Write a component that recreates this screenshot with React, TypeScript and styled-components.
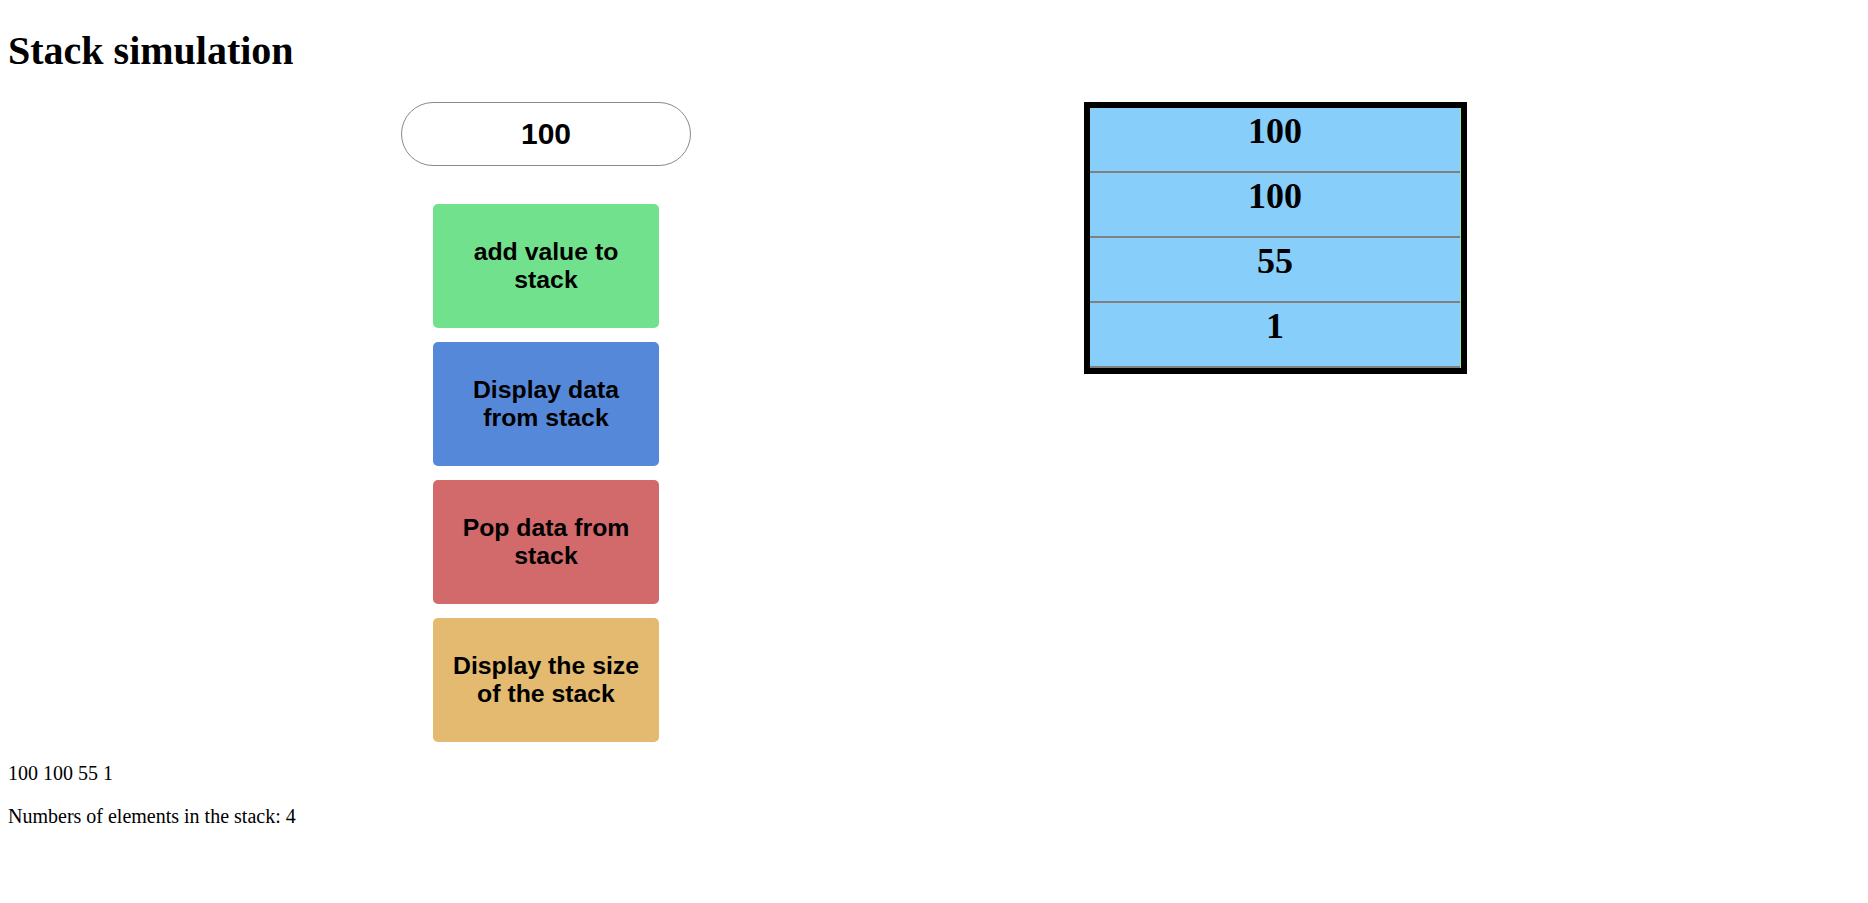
import React from "react";
import styled, { createGlobalStyle } from "styled-components";

const GlobalStyle = createGlobalStyle`
  body {
    margin: 8px;
    font-family: "Liberation Serif", "Times New Roman", serif;
    background: #ffffff;
    color: #000000;
  }
`;

const Title = styled.h1`
  font-family: "Liberation Serif", "Times New Roman", serif;
  font-size: 40px;
  font-weight: bold;
  margin: 18.5px 0 28.2px;
`;

const Workspace = styled.div`
  display: flex;
  justify-content: space-evenly;
  align-items: flex-start;
`;

const Controls = styled.div`
  display: flex;
  flex-direction: column;
  align-items: center;
  width: 290px;
`;

const ValueInput = styled.input`
  box-sizing: border-box;
  width: 290px;
  height: 64.5px;
  border: 1px solid #8a8a8a;
  border-radius: 33px;
  text-align: center;
  font-family: "Liberation Sans", Arial, sans-serif;
  font-size: 30px;
  font-weight: bold;
  color: #000000;
  outline: none;
  background: #ffffff;
  margin-bottom: 37.5px;
`;

const ButtonList = styled.div`
  display: flex;
  flex-direction: column;
  gap: 13.5px;
`;

const ActionButton = styled.button<{ $bg: string }>`
  box-sizing: border-box;
  width: 226px;
  height: 124.5px;
  padding: 0 10px;
  border: none;
  border-radius: 5px;
  background: ${(p) => p.$bg};
  color: #000000;
  font-family: "Liberation Sans", Arial, sans-serif;
  font-size: 24.8px;
  font-weight: bold;
  line-height: normal;
  cursor: pointer;
`;

const StackBox = styled.div`
  box-sizing: border-box;
  width: 383px;
  border: 6px solid #000000;
  background: #90ee90;
  display: flex;
  flex-direction: column;
`;

const StackRow = styled.div`
  box-sizing: border-box;
  height: 65px;
  margin-right: 1px;
  padding-top: 2px;
  background: #87cefa;
  border-bottom: 2px solid #808080;
  text-align: center;
  font-family: "Liberation Serif", "Times New Roman", serif;
  font-size: 36px;
  font-weight: bold;
`;

const Info = styled.p`
  font-family: "Liberation Serif", "Times New Roman", serif;
  font-size: 20px;
  margin: 20px 0;
`;

const stack = [100, 100, 55, 1];

const buttons = [
  { label: "add value to stack", bg: "#72e18d" },
  { label: "Display data from stack", bg: "#5688da" },
  { label: "Pop data from stack", bg: "#d2696a" },
  { label: "Display the size of the stack", bg: "#e3ba6f" },
];

export default function App() {
  return (
    <>
      <GlobalStyle />
      <Title>Stack simulation</Title>
      <Workspace>
        <Controls>
          <ValueInput type="text" defaultValue="100" />
          <ButtonList>
            {buttons.map((b) => (
              <ActionButton key={b.label} $bg={b.bg}>
                {b.label}
              </ActionButton>
            ))}
          </ButtonList>
        </Controls>
        <StackBox>
          {stack.map((v, i) => (
            <StackRow key={i}>{v}</StackRow>
          ))}
        </StackBox>
      </Workspace>
      <Info>{stack.join(" ")}</Info>
      <Info>Numbers of elements in the stack: {stack.length}</Info>
    </>
  );
}
